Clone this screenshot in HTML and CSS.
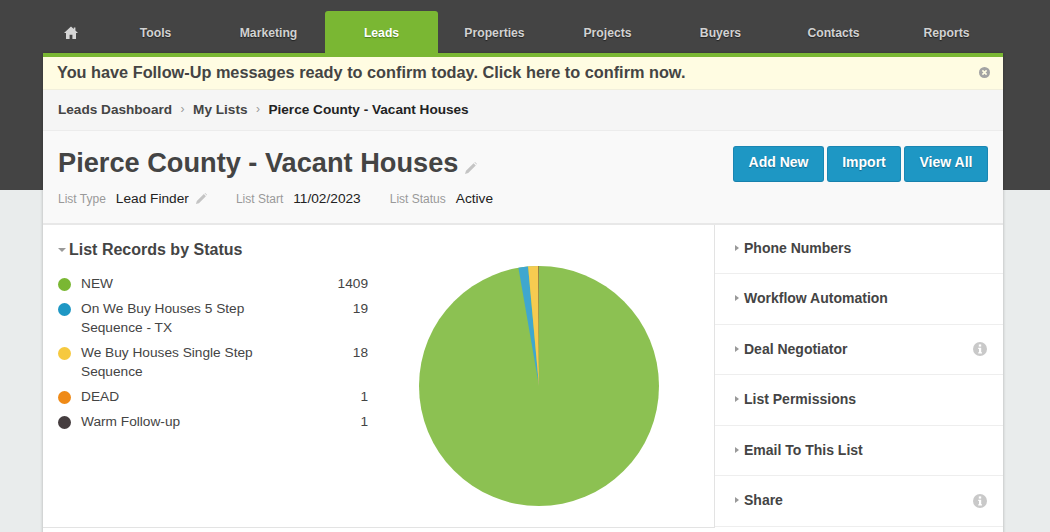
FILE: index.html
```html
<!DOCTYPE html>
<html>
<head>
    <title>Pierce County - Vacant Houses</title>
    <link rel="stylesheet" href="styles.css">
</head>
<body>
    <div class="wrap">
        <div class="nav">
            <a class="nav-home">
                <svg width="14" height="13" viewBox="0 0 14 13"><path d="M7 .6 0 7h2v6h3.6V8.8h2.8V13H12V7h2l-2.6-2.4V1.4H9.8v1.7z" fill="#d6d6d6"/></svg>
            </a>
            <a class="nav-item">Tools</a>
            <a class="nav-item">Marketing</a>
            <a class="nav-item active">Leads</a>
            <a class="nav-item">Properties</a>
            <a class="nav-item">Projects</a>
            <a class="nav-item">Buyers</a>
            <a class="nav-item">Contacts</a>
            <a class="nav-item">Reports</a>
        </div>

        <div class="card">
            <div class="notice">
                <span>You have Follow-Up messages ready to confirm today. Click here to confirm now.</span>
                <svg class="notice-close" width="11" height="11" viewBox="0 0 11 11"><circle cx="5.5" cy="5.5" r="5.5" fill="#a3a3a3"/><path d="M3.4 3.4l4.2 4.2M7.6 3.4 3.4 7.6" stroke="#fffde3" stroke-width="1.6"/></svg>
            </div>

            <div class="crumbs">
                <a>Leads Dashboard</a>
                <span class="crumb-sep">&rsaquo;</span>
                <a>My Lists</a>
                <span class="crumb-sep">&rsaquo;</span>
                <strong>Pierce County - Vacant Houses</strong>
            </div>

            <div class="head">
                <div class="head-main">
                    <h1>Pierce County - Vacant Houses
                        <svg class="pencil" width="13" height="13" viewBox="0 0 13 13"><path d="M9.6 1.2l2.2 2.2-7.6 7.6L1 12l1-3.2zM10.4.4l.6-.4 2 2-.4.6z" fill="#c4c4c4"/></svg>
                    </h1>
                    <div class="meta">
                        <span class="meta-label">List Type</span>
                        <span class="meta-value">Lead Finder</span>
                        <svg class="pencil-small" width="12" height="12" viewBox="0 0 13 13"><path d="M9.6 1.2l2.2 2.2-7.6 7.6L1 12l1-3.2zM10.4.4l.6-.4 2 2-.4.6z" fill="#c4c4c4"/></svg>
                        <span class="meta-label gap">List Start</span>
                        <span class="meta-value">11/02/2023</span>
                        <span class="meta-label gap">List Status</span>
                        <span class="meta-value">Active</span>
                    </div>
                </div>
                <div class="head-buttons">
                    <button class="btn btn-add">Add New</button>
                    <button class="btn btn-import">Import</button>
                    <button class="btn btn-view">View All</button>
                </div>
            </div>

            <div class="columns">
                <div class="left">
                    <div class="status">
                        <div class="status-list">
                            <h2><span class="arrow-down"></span>List Records by Status</h2>
                            <div class="status-row"><span class="dot green"></span><span class="status-name">NEW</span><span class="status-count">1409</span></div>
                            <div class="status-row"><span class="dot blue"></span><span class="status-name">On We Buy Houses 5 Step Sequence - TX</span><span class="status-count">19</span></div>
                            <div class="status-row"><span class="dot yellow"></span><span class="status-name">We Buy Houses Single Step Sequence</span><span class="status-count">18</span></div>
                            <div class="status-row"><span class="dot orange"></span><span class="status-name">DEAD</span><span class="status-count">1</span></div>
                            <div class="status-row"><span class="dot dark"></span><span class="status-name">Warm Follow-up</span><span class="status-count">1</span></div>
                        </div>
                        <svg class="pie" width="240" height="240" viewBox="-120 -120 240 240">
                            <circle r="120" fill="#8cc152"/>
                            <path d="M0 0 -20.6 -118.2A120 120 0 0 1 -10.9 -119.5z" fill="#3fa7cf"/>
                            <path d="M0 0 -10.9 -119.5A120 120 0 0 1 -1 -120z" fill="#f6cb50"/>
                            <path d="M0 0 -1 -120A120 120 0 0 1 -.5 -120z" fill="#ef8a1f"/>
                            <path d="M0 0 -.5 -120A120 120 0 0 1 0 -120z" fill="#6b5b50"/>
                        </svg>
                    </div>
                </div>
                <div class="right">
                    <div class="side-row"><span class="arrow-right"></span>Phone Numbers</div>
                    <div class="side-row"><span class="arrow-right"></span>Workflow Automation</div>
                    <div class="side-row"><span class="arrow-right"></span>Deal Negotiator
                        <svg class="info" width="14" height="14" viewBox="0 0 14 14"><circle cx="7" cy="7" r="7" fill="#c9c9c9"/><rect x="5.8" y="2.4" width="2.4" height="2.2" fill="#fff"/><path d="M5.2 5.8h3v4.4h.8v1.3H5.2v-1.3H6V7.1h-.8z" fill="#fff"/></svg>
                    </div>
                    <div class="side-row"><span class="arrow-right"></span>List Permissions</div>
                    <div class="side-row"><span class="arrow-right"></span>Email To This List</div>
                    <div class="side-row"><span class="arrow-right"></span>Share
                        <svg class="info" width="14" height="14" viewBox="0 0 14 14"><circle cx="7" cy="7" r="7" fill="#c9c9c9"/><rect x="5.8" y="2.4" width="2.4" height="2.2" fill="#fff"/><path d="M5.2 5.8h3v4.4h.8v1.3H5.2v-1.3H6V7.1h-.8z" fill="#fff"/></svg>
                    </div>
                </div>
            </div>
        </div>
    </div>
</body>
</html>
```

FILE: styles.css
```css
html, body {
    height: 532px;
    overflow: hidden;
}

body {
    margin: 0;
    font-family: "Liberation Sans", Arial, sans-serif;
    color: #444;
    background: linear-gradient(#444 190px, #e9ecec 190px);
}

.wrap {
    width: 960px;
    margin-left: 43px;
}

/* top nav */
.nav {
    display: flex;
    height: 42px;
    padding-top: 11px;
}

.nav-home {
    width: 56px;
    display: flex;
    align-items: center;
    justify-content: center;
}

.nav-item {
    width: 113px;
    line-height: 44px;
    height: 42px;
    text-align: center;
    font-size: 12.2px;
    font-weight: bold;
    color: #d2d2d2;
    text-shadow: 0 1px 1px #222;
}

.nav-item.active {
    background-color: #7ab733;
    color: #fff;
    border-radius: 3px 3px 0 0;
    text-shadow: 0 1px 1px #4f7d1c;
}

.card {
    border-top: 4px solid #7ab733;
    background-color: #fff;
    box-shadow: 0 0 3px rgba(0, 0, 0, 0.25);
    height: 480px;
}

.notice {
    height: 33px;
    padding: 0 14px 2px;
    display: flex;
    align-items: center;
    justify-content: space-between;
    background-color: #fffce2;
    font-size: 16.3px;
    font-weight: bold;
    color: #444;
    border-bottom: 1px solid #f1efdc;
    box-sizing: border-box;
}

.notice-close {
    margin-right: -1px;
}

.crumbs {
    height: 41px;
    padding: 0 0 2px 15px;
    box-sizing: border-box;
    display: flex;
    align-items: center;
    background-color: #f5f5f5;
    border-bottom: 1px solid #ececec;
    font-size: 13.6px;
    font-weight: bold;
    color: #444;
}

.crumb-sep {
    margin: 0 8.5px;
    color: #999;
    font-weight: normal;
    font-size: 12px;
}

.crumbs strong {
    color: #222;
}

.head {
    height: 92px;
    padding: 0 15px;
    display: flex;
    justify-content: space-between;
    background-color: #f9f9f9;
    border-bottom: 2px solid #e8e8e8;
}

h1 {
    margin: 15px 0 0;
    font-size: 27.2px;
    line-height: 34px;
    color: #444;
}

.pencil {
    margin-left: -2px;
    vertical-align: -3px;
}

.meta {
    margin-top: 11px;
    display: flex;
    align-items: baseline;
    font-size: 13.7px;
    color: #222;
}

.meta-label {
    font-size: 12px;
    color: #999;
    margin-right: 10px;
}

.meta-label.gap {
    margin-left: 29px;
}

.pencil-small {
    margin-left: 6px;
    align-self: center;
}

.head-buttons {
    display: flex;
    gap: 3px;
    padding-top: 15px;
    align-items: flex-start;
}

.btn {
    height: 36px;
    padding: 0 0 4px;
    border: 1px solid #1a86b3;
    border-bottom-color: #1781ad;
    border-radius: 3px;
    background-color: #1e97c4;
    color: #fff;
    font-family: "Liberation Sans", Arial, sans-serif;
    font-size: 14px;
    font-weight: bold;
    text-shadow: 0 1px 1px #14688c;
}

.btn-add { width: 91px; }
.btn-import { width: 74px; }
.btn-view { width: 84px; }

.columns {
    display: flex;
}

.left {
    width: 671px;
    border-right: 1px solid #e3e3e3;
    box-sizing: content-box;
}

.status {
    height: 302px;
    display: flex;
    border-bottom: 1px solid #e3e3e3;
}

.status-list {
    width: 325px;
    padding: 15px 0 0 15px;
    box-sizing: content-box;
}

h2 {
    margin: 0 0 14px;
    font-size: 16px;
    line-height: 20px;
    color: #444;
}

.arrow-down {
    display: inline-block;
    width: 0;
    height: 0;
    margin-right: 3px;
    vertical-align: 3px;
    border-left: 4px solid transparent;
    border-right: 4px solid transparent;
    border-top: 4px solid #999;
}

.status-row {
    display: flex;
    margin-bottom: 6px;
    font-size: 13.7px;
    line-height: 19px;
    color: #444;
}

.dot {
    flex: none;
    width: 13px;
    height: 13px;
    margin: 4px 10px 0 0;
    border-radius: 50%;
}

.green { background-color: #7ab733; }
.blue { background-color: #1e97c4; }
.yellow { background-color: #f6c93f; }
.orange { background-color: #ef8a17; }
.dark { background-color: #453d3f; }

.status-name {
    width: 190px;
}

.status-count {
    margin-left: auto;
    margin-right: 15px;
    text-align: right;
}

.pie {
    margin: 41px 0 0 36px;
}

.right {
    flex: 1;
}

.side-row {
    height: 50.5px;
    padding: 0 16px 1px 20px;
    display: flex;
    align-items: center;
    box-sizing: border-box;
    border-bottom: 1px solid #eee;
    font-size: 14px;
    font-weight: bold;
    color: #444;
}

.side-row:first-child {
    height: 49px;
    padding-bottom: 3px;
}

.arrow-right {
    width: 0;
    height: 0;
    margin-right: 5px;
    border-top: 3.5px solid transparent;
    border-bottom: 3.5px solid transparent;
    border-left: 4px solid #999;
}

.info {
    margin-left: auto;
    margin-top: 1px;
}
```
